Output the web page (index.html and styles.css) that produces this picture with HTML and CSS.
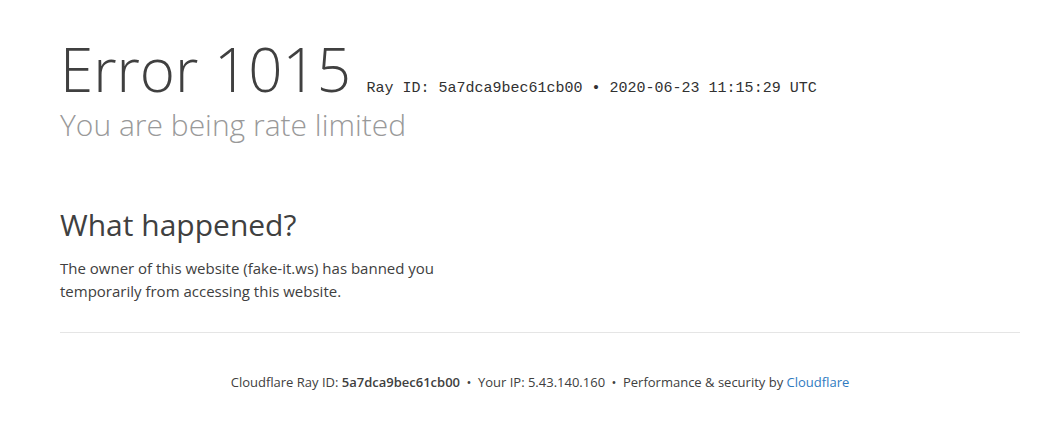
FILE: index.html
```html
<!DOCTYPE html>
<html lang="en">
<head>
<meta charset="utf-8">
<title>Access denied | fake-it.ws used Cloudflare to restrict access</title>
<link rel="stylesheet" href="styles.css">
</head>
<body>
<div class="wrapper">
  <header class="overview">
    <h1 class="title"><span>Error</span> <span>1015</span> <small class="ray">Ray ID: 5a7dca9bec61cb00 &bull; 2020-06-23 11:15:29 UTC</small></h1>
    <h2 class="subtitle">You are being rate limited</h2>
  </header>
  <section class="section">
    <h2 class="section-title">What happened?</h2>
    <p class="text">The owner of this website (fake-it.ws) has banned you<br>temporarily from accessing this website.</p>
  </section>
  <footer class="footer">
    <p class="footer-text">Cloudflare Ray ID: <strong class="bold">5a7dca9bec61cb00</strong><span class="sep">&bull;</span>Your IP: 5.43.140.160<span class="sep">&bull;</span>Performance &amp; security by <a class="link" href="#">Cloudflare</a></p>
  </footer>
</div>
</body>
</html>
```
FILE: styles.css
```css
html, body {
  margin: 0;
  padding: 0;
  background: #fff;
}
body {
  font-family: "Open Sans", "Helvetica Neue", Helvetica, Arial, sans-serif;
  color: #404040;
}
.wrapper {
  padding: 45px 41px 0 60px;
}
.title {
  margin: 0;
  font-size: 60px;
  font-weight: 300;
  line-height: 48px;
  color: #404040;
}
.ray {
  font-family: "Liberation Mono", "Courier New", monospace;
  font-size: 15px;
  font-weight: 400;
  color: #313131;
}
.subtitle {
  margin: 0;
  font-size: 30px;
  font-weight: 300;
  line-height: 24px;
  color: #999;
}
.section {
  padding-top: 70px;
}
.section-title {
  margin: 0;
  font-size: 30px;
  font-weight: 400;
  line-height: 36px;
  color: #404040;
}
.text {
  margin: 14px 0 0;
  font-size: 15px;
  line-height: 23px;
  color: #404040;
}
.footer {
  margin-top: 29px;
  border-top: 1px solid #e5e5e5;
  padding-top: 39px;
  text-align: center;
}
.footer-text {
  margin: 0;
  font-size: 13px;
  line-height: 20px;
  color: #404040;
}
.bold {
  font-weight: 600;
}
.sep {
  margin: 0 6.5px;
}
.link {
  color: #2f7bbf;
  text-decoration: none;
}
```
